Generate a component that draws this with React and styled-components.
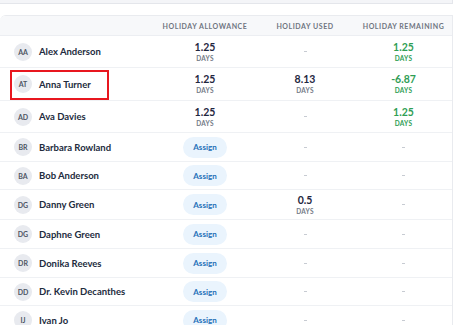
import React from "react";
import styled, { createGlobalStyle } from "styled-components";

const Global = createGlobalStyle`
  html, body { margin: 0; padding: 0; background: #ffffff; }
  body { font-family: "Lato", "Liberation Sans", sans-serif; -webkit-font-smoothing: antialiased; }
  * { box-sizing: border-box; }
`;

const Page = styled.div`
  width: 454px;
  height: 325px;
  overflow: hidden;
  display: flex;
  flex-direction: column;
  gap: 11px;
`;

const TopStrip = styled.div`
  flex: none;
  height: 4px;
  width: 453px;
  background: #f4f5f8;
  border-bottom: 1px solid #e4e6eb;
  border-right: 1px solid #e4e6eb;
`;

const Table = styled.div`
  flex: none;
  width: 453px;
  border-top: 1px solid #e9ebef;
  border-right: 1px solid #e9ebef;
  border-top-left-radius: 6px;
  overflow: hidden;
  display: flex;
  flex-direction: column;
`;

const cols = "155px 100px 100px 97px";

const HeadRow = styled.div`
  flex: none;
  display: grid;
  grid-template-columns: ${cols};
  height: 20px;
  background: #f7f8fa;
  border-bottom: 1px solid #eceef2;
`;

const HeadCell = styled.div`
  display: flex;
  align-items: center;
  justify-content: center;
  font-size: 7px;
  font-weight: 700;
  letter-spacing: 0.55px;
  color: #6f7581;
  text-transform: uppercase;
  white-space: nowrap;
`;

const Row = styled.div`
  flex: none;
  display: grid;
  grid-template-columns: ${cols};
  height: ${(p) => p.$h}px;
  border-bottom: 1px solid #eff1f4;
`;

const NameCell = styled.div`
  position: relative;
  display: flex;
  align-items: center;
  gap: 7px;
  padding-left: 14px;
`;

const Avatar = styled.div`
  width: 18px;
  height: 18px;
  border-radius: 50%;
  background: #e8eaef;
  color: #4d5563;
  font-size: 7px;
  font-weight: 700;
  display: flex;
  align-items: center;
  justify-content: center;
  flex: none;
`;

const Name = styled.span`
  font-size: 9.5px;
  font-weight: 700;
  color: #222b3d;
  white-space: nowrap;
`;

const Highlight = styled.div`
  position: absolute;
  left: 10px;
  top: 2px;
  width: 99px;
  height: 30px;
  border: 2px solid #e8171f;
  pointer-events: none;
`;

const Cell = styled.div`
  display: flex;
  flex-direction: column;
  align-items: center;
  justify-content: center;
`;

const Num = styled.div`
  font-size: 10.5px;
  font-weight: 700;
  line-height: 12px;
  color: ${(p) => (p.$green ? "#2f9e55" : "#1f2740")};
`;

const Unit = styled.div`
  font-size: 6.5px;
  font-weight: 700;
  letter-spacing: 0.3px;
  line-height: 9px;
  margin-top: 1px;
  color: ${(p) => (p.$green ? "#2f9e55" : "#737a86")};
`;

const Dash = styled.div`
  width: 3px;
  height: 1px;
  background: #c7cbd2;
`;

const AssignButton = styled.button`
  width: 44px;
  height: 21px;
  border: none;
  border-radius: 11px;
  background: #eaf4fd;
  color: #2670b8;
  font-family: inherit;
  font-size: 8px;
  font-weight: 700;
  padding: 0;
  cursor: pointer;
`;

const Value = ({ v, green }) =>
  v == null ? (
    <Dash />
  ) : (
    <>
      <Num $green={green}>{v}</Num>
      <Unit $green={green}>DAYS</Unit>
    </>
  );

const rows = [
  { i: "AA", n: "Alex Anderson", a: "1.25", u: null, r: "1.25", h: 32 },
  { i: "AT", n: "Anna Turner", a: "1.25", u: "8.13", r: "-6.87", h: 33, hl: true },
  { i: "AD", n: "Ava Davies", a: "1.25", u: null, r: "1.25", h: 32 },
  { i: "BR", n: "Barbara Rowland", h: 29 },
  { i: "BA", n: "Bob Anderson", h: 28 },
  { i: "DG", n: "Danny Green", u: "0.5", h: 30 },
  { i: "DG", n: "Daphne Green", h: 29 },
  { i: "DR", n: "Donika Reeves", h: 29 },
  { i: "DD", n: "Dr. Kevin Decanthes", h: 28 },
  { i: "IJ", n: "Ivan Jo", h: 29 },
];

export default function App() {
  return (
    <>
      <Global />
      <Page>
        <TopStrip />
        <Table>
          <HeadRow>
            <HeadCell />
            <HeadCell>Holiday Allowance</HeadCell>
            <HeadCell>Holiday Used</HeadCell>
            <HeadCell>Holiday Remaining</HeadCell>
          </HeadRow>
          {rows.map((r, k) => (
            <Row key={k} $h={r.h}>
              <NameCell>
                <Avatar>{r.i}</Avatar>
                <Name>{r.n}</Name>
                {r.hl && <Highlight />}
              </NameCell>
              <Cell>
                {r.a ? <Value v={r.a} /> : <AssignButton>Assign</AssignButton>}
              </Cell>
              <Cell>
                <Value v={r.u} />
              </Cell>
              <Cell>
                <Value v={r.r} green={r.r != null} />
              </Cell>
            </Row>
          ))}
        </Table>
      </Page>
    </>
  );
}
